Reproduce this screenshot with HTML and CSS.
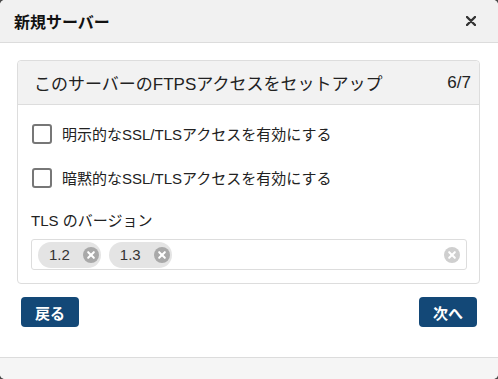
FILE: index.html
```html
<!DOCTYPE html>
<html lang="ja">
  <head>
    <meta charset="UTF-8" />
    <meta name="viewport" content="width=device-width, initial-scale=1.0" />
    <title>新規サーバー</title>
    <link rel="stylesheet" href="styles.css">
  </head>
  <body>
    <div class="modal">
      <div class="modal-header">
        <h1>新規サーバー</h1>
        <button class="close">
          <svg width="10" height="10" viewBox="0 0 10 10">
            <path d="M1 1 L9 9 M9 1 L1 9" stroke="#333" stroke-width="2.4" stroke-linecap="round" />
          </svg>
        </button>
      </div>
      <div class="modal-body">
        <div class="card">
          <div class="card-header">
            <p>このサーバーのFTPSアクセスをセットアップ</p>
            <span class="step">6/7</span>
          </div>
          <div class="card-body">
            <label class="check">
              <input type="checkbox" />
              <span>明示的なSSL/TLSアクセスを有効にする</span>
            </label>
            <label class="check">
              <input type="checkbox" />
              <span>暗黙的なSSL/TLSアクセスを有効にする</span>
            </label>
            <div class="field-label">TLS のバージョン</div>
            <div class="multi-select">
              <ul class="tags">
                <li>1.2 <i class="tag-remove"></i></li>
                <li>1.3 <i class="tag-remove"></i></li>
              </ul>
              <i class="clear-all"></i>
            </div>
          </div>
        </div>
        <div class="actions">
          <button class="btn">戻る</button>
          <button class="btn">次へ</button>
        </div>
      </div>
      <div class="modal-footer"></div>
    </div>
  </body>
</html>
```

FILE: styles.css
```css
* {
  box-sizing: border-box;
}

body {
  margin: 0;
  background: #4a4a4a;
  font-family: "Liberation Sans", "Noto Sans CJK JP", sans-serif;
  color: #222;
}

.modal {
  width: 498px;
  height: 379px;
  background: #fff;
  border-radius: 5px;
  overflow: hidden;
  display: flex;
  flex-direction: column;
}

.modal-header {
  height: 43px;
  background: #f1f1f1;
  border-bottom: 1px solid #dcdcdc;
  display: flex;
  align-items: center;
  justify-content: space-between;
  padding: 0 22px 0 14px;
}

.modal-header h1 {
  margin: 0;
  font-size: 16px;
  font-weight: bold;
  color: #111;
}

.modal-header .close {
  appearance: none;
  border: none;
  background: none;
  padding: 0;
  display: flex;
  cursor: pointer;
}

.modal-body {
  padding: 17px 18px 30px 17px;
}

.card {
  border: 1px solid #ddd;
  border-radius: 4px;
}

.card-header {
  height: 44px;
  background: #f2f2f2;
  border-bottom: 1px solid #ddd;
  border-radius: 4px 4px 0 0;
  display: flex;
  align-items: center;
  justify-content: space-between;
  padding: 0 8px 0 16px;
}

.card-header p {
  margin: 0;
  font-size: 17px;
}

.card-header .step {
  font-size: 17px;
}

.card-body {
  padding: 18px 12px 13px 13px;
}

.check {
  display: flex;
  align-items: center;
  height: 21px;
  margin-bottom: 23px;
  font-size: 15px;
  cursor: pointer;
}

.check input {
  appearance: none;
  margin: 0 10px 0 1px;
  width: 20px;
  height: 20px;
  border: 2px solid #777;
  border-radius: 3px;
  background: #fff;
}

.field-label {
  font-size: 15px;
  line-height: 20px;
  margin-bottom: 8px;
}

.multi-select {
  height: 31px;
  border: 1px solid #ddd;
  border-radius: 3px;
  display: flex;
  align-items: center;
  justify-content: space-between;
  padding: 0 6px 0 6px;
}

.tags {
  margin: 0;
  padding: 0;
  list-style: none;
  display: flex;
  gap: 8px;
}

.tags li {
  height: 26px;
  border-radius: 13px;
  background: #e4e4e4;
  display: flex;
  align-items: center;
  padding: 0 2px 0 11px;
  font-size: 15px;
  color: #333;
}

.tag-remove,
.clear-all {
  position: relative;
  width: 16px;
  height: 16px;
  border-radius: 50%;
  background: #a9a9a9;
  display: inline-block;
}

.tag-remove {
  margin-left: 13px;
}

.clear-all {
  background: #cfcfcf;
}

.tag-remove::before,
.tag-remove::after,
.clear-all::before,
.clear-all::after {
  content: "";
  position: absolute;
  left: 7px;
  top: 3px;
  width: 2px;
  height: 10px;
  background: #fff;
  border-radius: 1px;
  transform: rotate(45deg);
}

.tag-remove::after,
.clear-all::after {
  transform: rotate(-45deg);
}

.actions {
  display: flex;
  justify-content: space-between;
  padding: 13px 3px 0 4px;
}

.btn {
  appearance: none;
  border: none;
  width: 58px;
  height: 30px;
  border-radius: 4px;
  background: #134877;
  color: #fff;
  font-family: inherit;
  font-size: 15px;
  font-weight: bold;
  cursor: pointer;
}

.modal-footer {
  flex: 1;
  background: #f5f5f5;
  border-top: 1px solid #dcdcdc;
}
```
